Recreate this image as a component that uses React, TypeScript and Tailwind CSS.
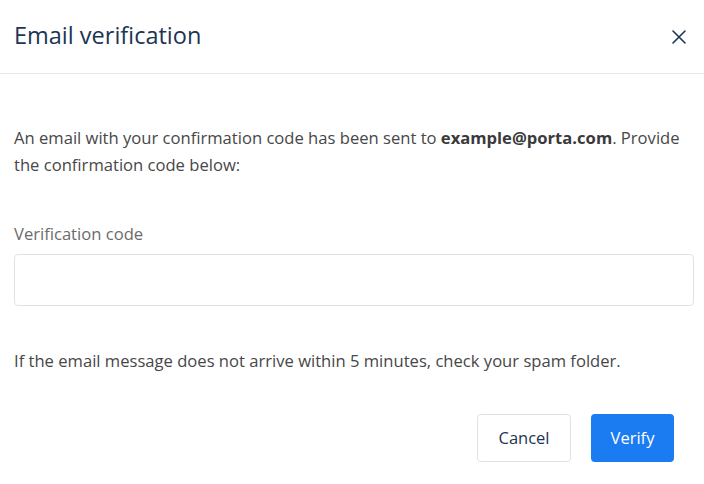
import React from "react";

export default function App() {
  return (
    <div className="w-[704px] h-[484px] bg-white text-[#474747]" style={{ fontFamily: '"Open Sans", "Noto Sans", sans-serif' }}>
      <div className="h-[74px] border-b border-[#e3e6ea] flex items-center justify-between pl-[14px] pr-[17px]">
        <h1 className="text-[23.5px] text-[#1c3553] leading-none pb-[1px]">Email verification</h1>
        <button className="w-[16px] h-[16px] flex items-center justify-center text-[#1c3553]">
          <svg width="16" height="16" viewBox="0 0 16 16" fill="none" stroke="currentColor" strokeWidth="1.6" strokeLinecap="round">
            <path d="M2 2 L14 14 M14 2 L2 14" />
          </svg>
        </button>
      </div>
      <div className="px-[14px] pt-[50px]">
        <p className="text-[16.6px] leading-[27px]">
          An email with your confirmation code has been sent to <b className="font-bold text-[#3a3a3a]">example@porta.com</b>. Provide the confirmation code below:
        </p>
        <label className="block mt-[42px] text-[16.6px] leading-[27px] text-[#6b6b6b]">Verification code</label>
        <input className="mt-[7px] block w-[680px] h-[52px] border border-[#dfe2e6] rounded-[4px] outline-none" />
        <p className="mt-[41px] text-[16.6px] leading-[27px]">
          If the email message does not arrive within 5 minutes, check your spam folder.
        </p>
      </div>
      <div className="flex justify-end gap-[20px] pr-[30px] mt-[40px]">
        <button className="w-[94px] h-[48px] border border-[#dfe2e6] rounded-[4px] text-[16.5px] text-[#1c3553] bg-white">Cancel</button>
        <button className="w-[83px] h-[48px] rounded-[4px] text-[16.5px] text-white bg-[#1b7cf2] font-medium">Verify</button>
      </div>
    </div>
  );
}
